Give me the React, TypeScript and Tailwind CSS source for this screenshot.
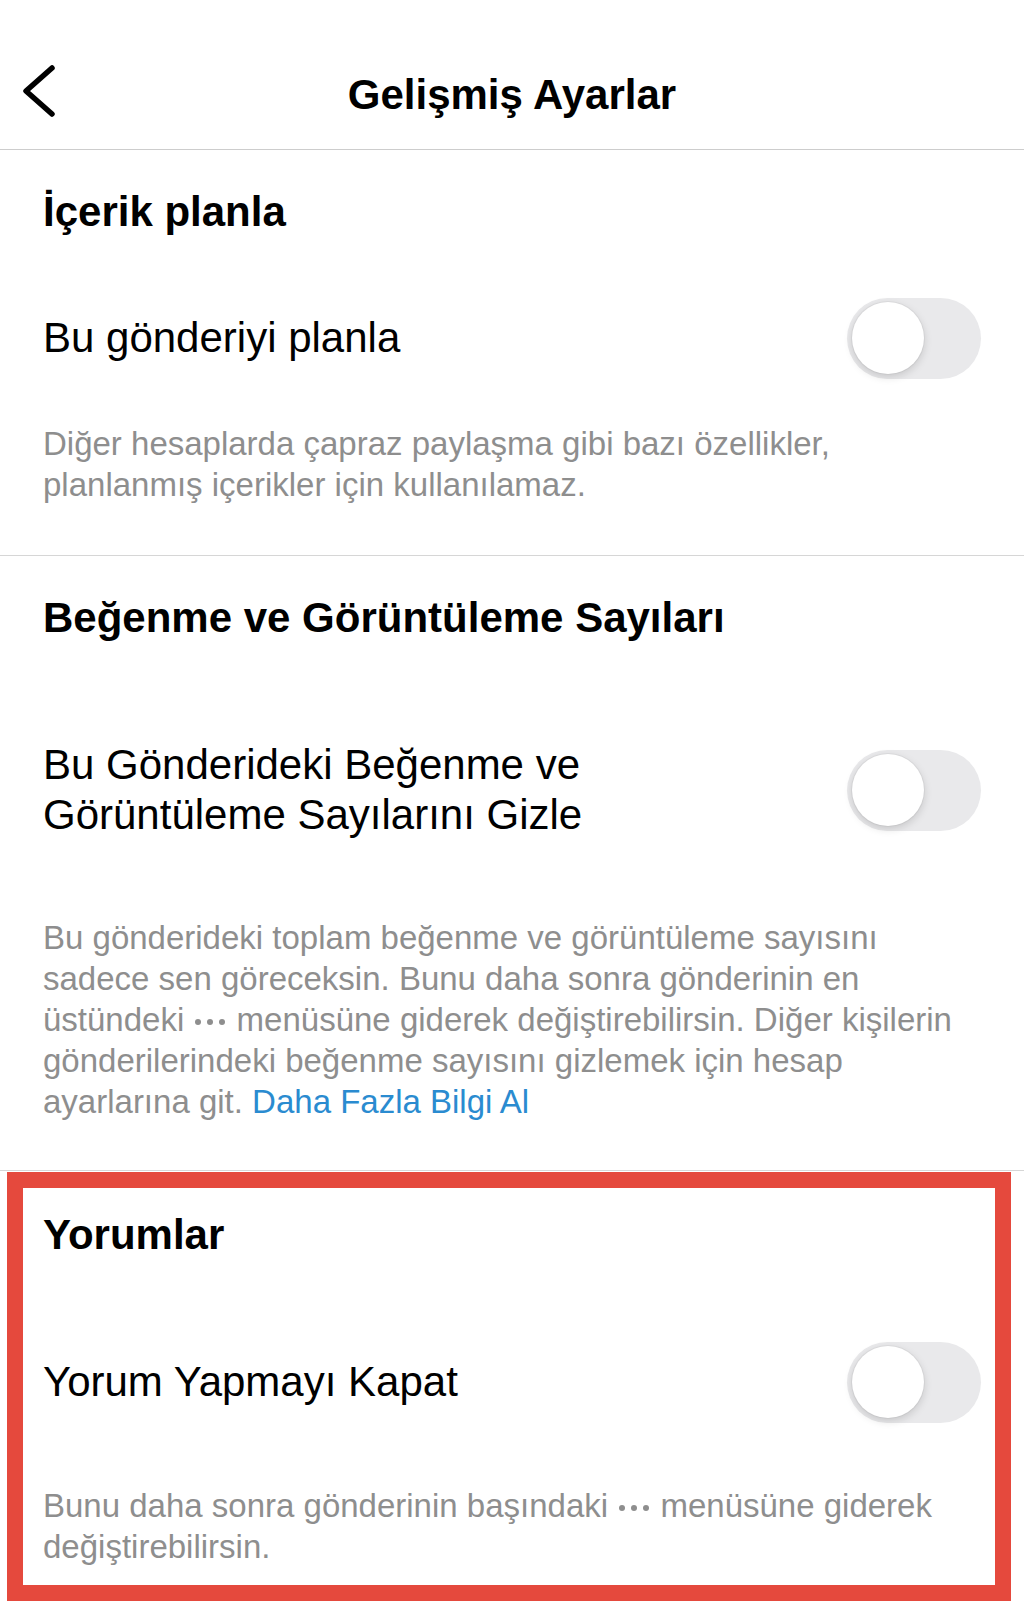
import React from "react";

function Toggle() {
  return (
    <div className="relative h-[81px] w-[134px] shrink-0 rounded-full bg-[#e9e9eb]">
      <div className="absolute left-[5px] top-[4.5px] h-[72px] w-[72px] rounded-full bg-white shadow-[0_3px_8px_rgba(0,0,0,0.15),0_0_0_1px_rgba(0,0,0,0.04)]" />
    </div>
  );
}

// "•••" menu glyph, drawn as three small dots
const Dots = () => (
  <span className="mx-[2px] inline-flex gap-[6px] align-middle">
    <span className="h-[6px] w-[6px] rounded-full bg-[#8e8e8e]" />
    <span className="h-[6px] w-[6px] rounded-full bg-[#8e8e8e]" />
    <span className="h-[6px] w-[6px] rounded-full bg-[#8e8e8e]" />
  </span>
);

export default function App() {
  return (
    <div
      className="relative h-[1609px] w-[1024px] overflow-hidden bg-white text-black"
      style={{ fontFamily: '"Liberation Sans", Arial, sans-serif' }}
    >
      {/* header */}
      <div className="relative flex h-[149px] items-start justify-center pt-[40px]">
        <button type="button" className="absolute left-[22px] top-[64px]" aria-label="Geri">
          <svg width="34" height="54" viewBox="0 0 34 54" fill="none">
            <path d="M30 4 L4 27 L30 50" stroke="#000" strokeWidth="5.5" strokeLinecap="round" strokeLinejoin="round" />
          </svg>
        </button>
        <div className="flex h-[109px] items-center text-[42px] font-bold leading-none">Gelişmiş Ayarlar</div>
      </div>
      <div className="h-px bg-[#cdcdcd]" />

      {/* İçerik planla */}
      <section className="px-[43px] pt-[37px] pb-[50px]">
        <h2 className="text-[42px] font-bold leading-[50px]">İçerik planla</h2>
        <div className="mt-[60px] flex h-[82px] items-center justify-between">
          <span className="text-[42px] leading-[50px]">Bu gönderiyi planla</span>
          <Toggle />
        </div>
        <p className="mt-[44px] text-[33px] leading-[41px] text-[#8e8e8e]">
          Diğer hesaplarda çapraz paylaşma gibi bazı özellikler,
          <br />
          planlanmış içerikler için kullanılamaz.
        </p>
      </section>
      <div className="h-px bg-[#d6d6d6]" />

      {/* Beğenme ve Görüntüleme Sayıları */}
      <section className="px-[43px] pt-[37px] pb-[48px]">
        <h2 className="text-[42px] font-bold leading-[50px]">Beğenme ve Görüntüleme Sayıları</h2>
        <div className="mt-[97px] flex items-center justify-between">
          <span className="text-[42px] leading-[50px]">
            Bu Gönderideki Beğenme ve
            <br />
            Görüntüleme Sayılarını Gizle
          </span>
          <Toggle />
        </div>
        <p className="mt-[77px] whitespace-nowrap text-[33px] leading-[41px] text-[#8e8e8e]">
          Bu gönderideki toplam beğenme ve görüntüleme sayısını
          <br />
          sadece sen göreceksin. Bunu daha sonra gönderinin en
          <br />
          üstündeki <Dots /> menüsüne giderek değiştirebilirsin. Diğer kişilerin
          <br />
          gönderilerindeki beğenme sayısını gizlemek için hesap
          <br />
          ayarlarına git. <a className="text-[#2a8bd0]">Daha Fazla Bilgi Al</a>
        </p>
      </section>
      <div className="h-px bg-[#d6d6d6]" />

      {/* Yorumlar */}
      <section className="px-[43px] pt-[39px]">
        <h2 className="text-[42px] font-bold leading-[50px]">Yorumlar</h2>
        <div className="mt-[81px] flex h-[82px] items-center justify-between">
          <span className="text-[42px] leading-[50px]">Yorum Yapmayı Kapat</span>
          <Toggle />
        </div>
        <p className="mt-[62px] whitespace-nowrap text-[33px] leading-[41px] text-[#8e8e8e]">
          Bunu daha sonra gönderinin başındaki <Dots /> menüsüne giderek
          <br />
          değiştirebilirsin.
        </p>
      </section>

      {/* annotation box */}
      <div className="pointer-events-none absolute left-[7px] top-[1172px] h-[429px] w-[1004px] border-[16px] border-[#e5493d]" />
    </div>
  );
}
